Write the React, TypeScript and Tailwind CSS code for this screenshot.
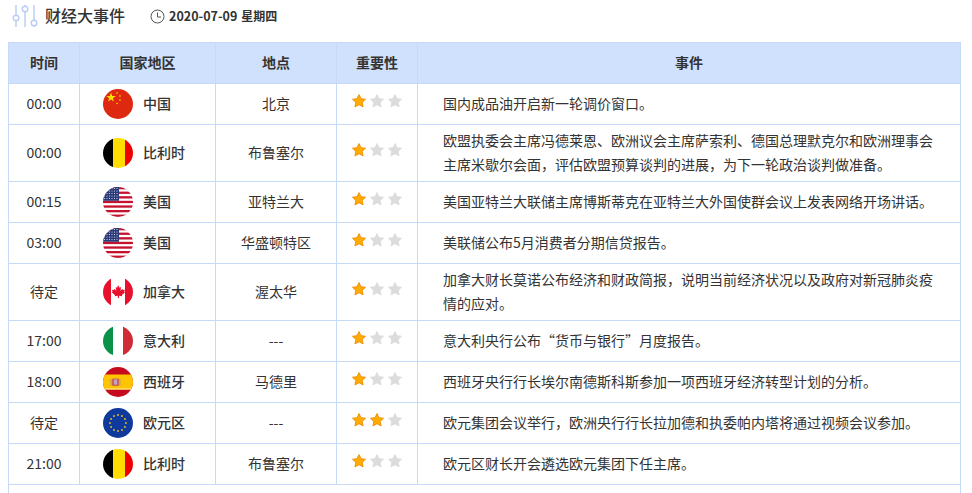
import React from "react";

const Star = ({ on }: { on: boolean }) => (
  <svg width="14" height="14" viewBox="0 0 24 24">
    <path
      d="M12 1l3.4 7 7.8 1-5.7 5.4 1.5 7.8L12 18.4l-7 3.8 1.5-7.8L.8 9l7.8-1z"
      fill={on ? "#ffab00" : "#dcdcdc"}
      stroke={on ? "#f08a00" : "#dcdcdc"}
      strokeWidth="1.5"
      strokeLinejoin="round"
    />
  </svg>
);

const Flag = ({ c }: { c: string }) => {
  const clip = `clip-${c}`;
  let body: React.ReactNode = null;
  if (c === "cn")
    body = (
      <>
        <rect width="30" height="30" fill="#de2910" />
        <path d="M8 3.6l1.2 3.4 3.6.1-2.9 2.1 1 3.4L8 10.6l-2.9 2 1-3.4-2.9-2.1 3.6-.1z" fill="#ffde00" />
        <circle cx="14" cy="4" r=".8" fill="#ffde00" />
        <circle cx="17" cy="7" r=".8" fill="#ffde00" />
        <circle cx="17" cy="11" r=".8" fill="#ffde00" />
        <circle cx="14" cy="14.5" r=".8" fill="#ffde00" />
      </>
    );
  if (c === "be")
    body = (
      <>
        <rect width="10" height="30" fill="#000" />
        <rect x="10" width="12" height="30" fill="#ffdd00" />
        <rect x="22" width="8" height="30" fill="#ee0000" />
      </>
    );
  if (c === "us")
    body = (
      <>
        <rect width="30" height="30" fill="#fff" />
        {[0, 4.6, 9.2, 13.8, 18.4, 23, 27.6].map((y) => (
          <rect key={y} y={y} width="30" height="2.3" fill="#c4122f" />
        ))}
        <rect width="16" height="13.8" fill="#2b3a78" />
        {[1.5, 4, 6.5, 9, 11.5].map((y) =>
          [1.5, 4, 6.5, 9, 11.5, 14].map((x) => (
            <circle key={`${x}-${y}`} cx={x} cy={y} r=".55" fill="#dfe3f2" />
          ))
        )}
      </>
    );
  if (c === "ca")
    body = (
      <>
        <rect width="30" height="30" fill="#fff" />
        <rect width="8" height="30" fill="#e8112d" />
        <rect x="22" width="8" height="30" fill="#e8112d" />
        <path
          d="M15 8l1.6 2.8 1.5-.7-.6 3.6 1.9-1.9.5 1.2 2-.3-.7 2.2.8.5-3.2 2.6.4 1.2-3.2-.4V21h-1.2v-2.2l-3.2.4.4-1.2-3.2-2.6.8-.5-.7-2.2 2 .3.5-1.2 1.9 1.9-.6-3.6 1.5.7z"
          fill="#e8112d"
        />
      </>
    );
  if (c === "it")
    body = (
      <>
        <rect width="10" height="30" fill="#0a9248" />
        <rect x="10" width="10" height="30" fill="#fff" />
        <rect x="20" width="10" height="30" fill="#ce2b37" />
      </>
    );
  if (c === "es")
    body = (
      <>
        <rect width="30" height="30" fill="#c60b1e" />
        <rect y="7.5" width="30" height="15" fill="#ffc400" />
        <rect y="21.5" width="30" height="1" fill="#fff3b0" />
        <rect x="9" y="11.5" width="7" height="7.5" rx="1" fill="#c8694a" />
        <rect x="11" y="12.5" width="3" height="5" fill="#c9a0c8" />
        <rect x="7.5" y="12" width="1.2" height="6.5" fill="#b0a080" />
        <rect x="16.3" y="12" width="1.2" height="6.5" fill="#b0a080" />
      </>
    );
  if (c === "eu")
    body = (
      <>
        <rect width="30" height="30" fill="#0f3a9c" />
        {Array.from({ length: 12 }).map((_, i) => {
          const a = (i * Math.PI) / 6;
          return <circle key={i} cx={15 + 8 * Math.cos(a)} cy={15 + 8 * Math.sin(a)} r=".95" fill="#e6c22e" />;
        })}
      </>
    );
  return (
    <svg width="30" height="30" viewBox="0 0 30 30" className="shrink-0">
      <clipPath id={clip}>
        <circle cx="15" cy="15" r="15" />
      </clipPath>
      <g clipPath={`url(#${clip})`}>{body}</g>
    </svg>
  );
};

const rows = [
  { t: "00:00", f: "cn", n: "中国", p: "北京", s: 1, e: "国内成品油开启新一轮调价窗口。", h: "h-[41px]" },
  { t: "00:00", f: "be", n: "比利时", p: "布鲁塞尔", s: 1, e: "欧盟执委会主席冯德莱恩、欧洲议会主席萨索利、德国总理默克尔和欧洲理事会主席米歇尔会面，评估欧盟预算谈判的进展，为下一轮政治谈判做准备。", h: "h-[57px]" },
  { t: "00:15", f: "us", n: "美国", p: "亚特兰大", s: 1, e: "美国亚特兰大联储主席博斯蒂克在亚特兰大外国使群会议上发表网络开场讲话。", h: "h-[41px]" },
  { t: "03:00", f: "us", n: "美国", p: "华盛顿特区", s: 1, e: "美联储公布5月消费者分期信贷报告。", h: "h-[41px]" },
  { t: "待定", f: "ca", n: "加拿大", p: "渥太华", s: 1, e: "加拿大财长莫诺公布经济和财政简报，说明当前经济状况以及政府对新冠肺炎疫情的应对。", h: "h-[57px]" },
  { t: "17:00", f: "it", n: "意大利", p: "---", s: 1, e: "意大利央行公布“货币与银行”月度报告。", h: "h-[41px]" },
  { t: "18:00", f: "es", n: "西班牙", p: "马德里", s: 1, e: "西班牙央行行长埃尔南德斯科斯参加一项西班牙经济转型计划的分析。", h: "h-[41px]" },
  { t: "待定", f: "eu", n: "欧元区", p: "---", s: 2, e: "欧元集团会议举行，欧洲央行行长拉加德和执委帕内塔将通过视频会议参加。", h: "h-[41px]" },
  { t: "21:00", f: "be", n: "比利时", p: "布鲁塞尔", s: 1, e: "欧元区财长开会遴选欧元集团下任主席。", h: "h-[41px]" },
];

const th = "border-r border-b border-[#c6d9f6] font-bold text-center align-middle pb-[2px]";
const td = "border-r border-b border-[#c6d9f6] align-middle p-0";

export default function App() {
  return (
    <div className="h-[493px] w-[972px] overflow-hidden bg-white flex flex-col text-[14px] text-[#333] font-['Noto_Sans_CJK_SC',sans-serif]">
      <div className="h-[42px] shrink-0 flex items-center pl-[12px] pb-[10px]">
        <svg width="26" height="24" viewBox="0 0 26 24" fill="none" stroke="#b9cdf2" strokeWidth="1.4">
          <path d="M4 1v10M4 17v6M13 1v1M13 8v15M22 1v15M22 22v1" />
          <circle cx="4" cy="14" r="2.8" />
          <circle cx="13" cy="5" r="2.8" />
          <circle cx="22" cy="19" r="2.8" />
        </svg>
        <span className="ml-[7px] text-[16px] font-medium leading-none mb-[2px]">财经大事件</span>
        <svg className="ml-[25px]" width="15" height="15" viewBox="0 0 15 15" fill="none" stroke="#555" strokeWidth="1">
          <circle cx="7.5" cy="7.5" r="6.5" />
          <path d="M7.5 3.5v4.5h3.5" />
        </svg>
        <span className="ml-[4px] text-[12px] font-bold leading-none">
          <span className="text-[12.5px]">2020-07-09</span>
          <span className="ml-[4px]">星期四</span>
        </span>
      </div>
      <div className="flex-1 ml-[8px] w-[953px] border-x border-t border-[#c6d9f6]">
        <table className="table-fixed w-[951px] border-separate border-spacing-0">
          <colgroup>
            <col className="w-[71px]" />
            <col className="w-[136px]" />
            <col className="w-[121px]" />
            <col className="w-[81px]" />
            <col />
          </colgroup>
          <thead>
            <tr className="bg-[#d0e1fd]">
              <th className={`${th} h-[41px]`}>时间</th>
              <th className={th}>国家地区</th>
              <th className={th}>地点</th>
              <th className={th}>重要性</th>
              <th className="border-b border-[#c6d9f6] font-bold text-center align-middle pb-[2px]">事件</th>
            </tr>
          </thead>
          <tbody>
            {rows.map((r, i) => (
              <tr key={i}>
                <td className={`${td} ${r.h} text-center pb-[2px]`}>{r.t}</td>
                <td className={td}>
                  <div className="flex items-center gap-[10px] pl-[23px]">
                    <Flag c={r.f} />
                    <span className="font-medium mb-[2px]">{r.n}</span>
                  </div>
                </td>
                <td className={`${td} text-center pb-[2px]`}>{r.p}</td>
                <td className={td}>
                  <div className="flex gap-[4px] pl-[15px] mb-[7px]">
                    {[1, 2, 3].map((k) => (
                      <Star key={k} on={k <= r.s} />
                    ))}
                  </div>
                </td>
                <td className="border-b border-[#c6d9f6] align-middle pl-[25px] pr-[26px] pb-[2px] leading-[24px]">{r.e}</td>
              </tr>
            ))}
          </tbody>
        </table>
      </div>
    </div>
  );
}
